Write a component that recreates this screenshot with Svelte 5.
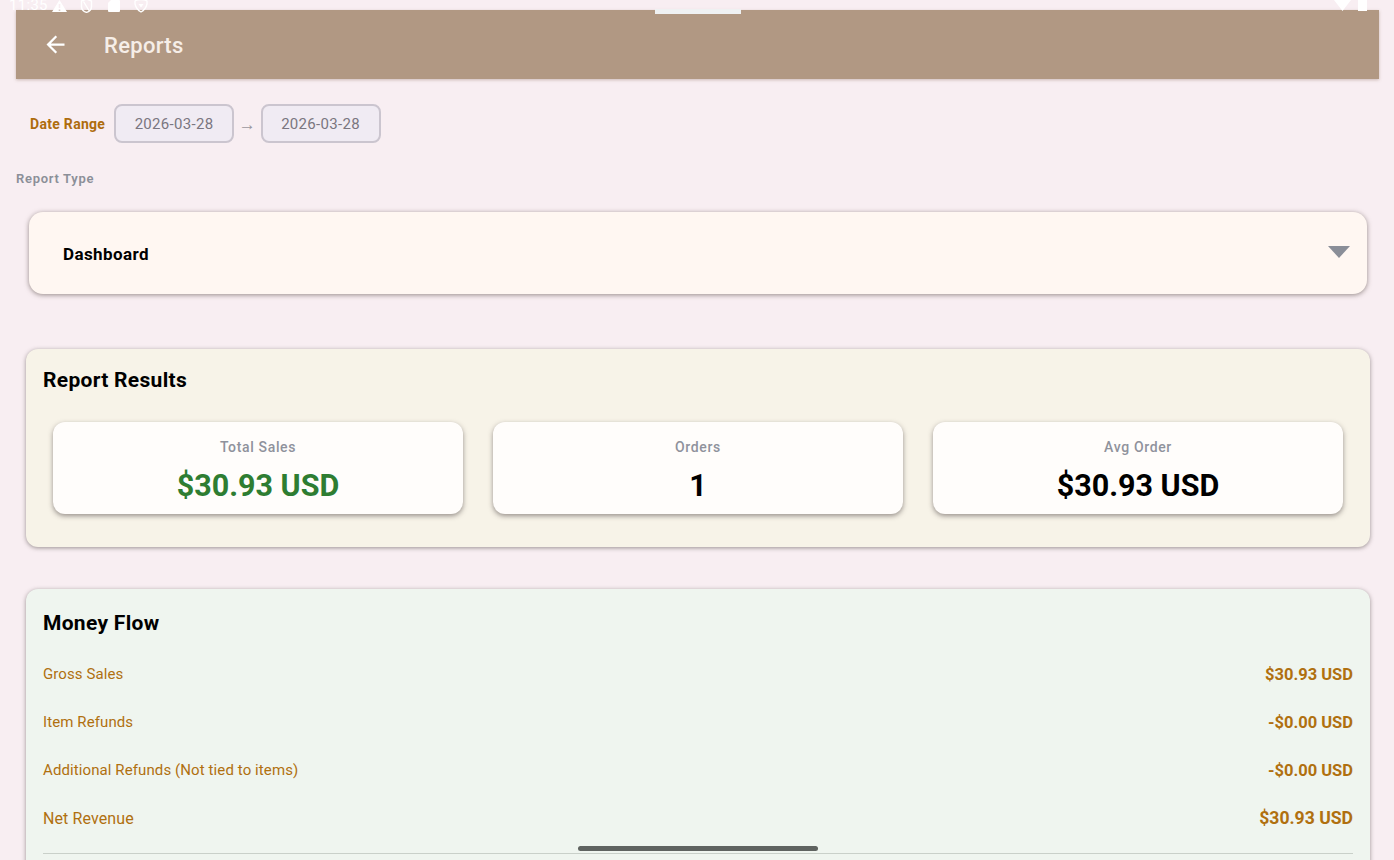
<script>
  const stats = [
    { label: 'Total Sales', value: '$30.93 USD', green: true },
    { label: 'Orders', value: '1' },
    { label: 'Avg Order', value: '$30.93 USD' }
  ];

  const flow = [
    { label: 'Gross Sales', value: '$30.93 USD' },
    { label: 'Item Refunds', value: '-$0.00 USD' },
    { label: 'Additional Refunds (Not tied to items)', value: '-$0.00 USD' },
    { label: 'Net Revenue', value: '$30.93 USD', big: true }
  ];
</script>

<div class="screen">
  <!-- system bars drawn over the app -->
  <div class="status-left">
    <span class="clock">11:35</span>
    <svg class="si warn" width="15" height="12" viewBox="0 0 15 12"><path d="M7.5 0 L15 12 H0 Z M6.7 4 V8 H8.3 V4 Z M6.7 9 V10.6 H8.3 V9 Z" fill="#fff" fill-rule="evenodd" /></svg>
    <svg class="si shield" width="13" height="13" viewBox="0 0 13 13"><path d="M1.5 1 L6.5 -1 L11.5 1 V6.5 C11.5 9.5 9.5 11.5 6.5 12.4 C3.5 11.5 1.5 9.5 1.5 6.5 Z M3.5 1.5 L9 10.5" fill="none" stroke="#fff" stroke-width="1.4" /></svg>
    <svg class="si sd" width="12" height="12" viewBox="0 0 12 12"><path d="M3 0 H11 Q12 0 12 1 V11 Q12 12 11 12 H1 Q0 12 0 11 V3 Z" fill="#fff" /></svg>
    <svg class="si vpn" width="14" height="13" viewBox="0 0 14 13"><path d="M1 1 C4 -1 10 -1 13 1 L13 4 C12 8 10 10.5 7 12 C4 10.5 2 8 1 4 Z" fill="none" stroke="#fff" stroke-width="1.3" /><path d="M4.5 4 H9.5 L7 7.5 Z" fill="#fff" /></svg>
  </div>
  <div class="notch"></div>
  <div class="status-right">
    <svg width="17" height="11" viewBox="0 0 17 11"><path d="M0 0 H17 L8.5 11 Z" fill="#fff" /></svg>
    <span class="battery"></span>
  </div>

  <header class="appbar">
    <svg class="back" width="27" height="27" viewBox="0 0 24 24"><path d="M20 11H7.83l5.59-5.59L12 4l-8 8 8 8 1.41-1.41L7.83 13H20v-2z" fill="#fff" /></svg>
    <h1>Reports</h1>
  </header>

  <div class="date-row">
    <span class="date-label">Date Range</span>
    <div class="date-box">2026-03-28</div>
    <span class="arrow">→</span>
    <div class="date-box">2026-03-28</div>
  </div>

  <div class="type-label">Report Type</div>

  <div class="select">
    <span class="select-text">Dashboard</span>
    <span class="caret"></span>
  </div>

  <section class="card results">
    <h2>Report Results</h2>
    <div class="stats">
      {#each stats as s}
        <div class="stat">
          <div class="stat-label">{s.label}</div>
          <div class="stat-value" class:green={s.green}>{s.value}</div>
        </div>
      {/each}
    </div>
  </section>

  <section class="card money">
    <h2>Money Flow</h2>
    {#each flow as row}
      <div class="flow-row" class:big={row.big}>
        <span>{row.label}</span>
        <span class="flow-value">{row.value}</span>
      </div>
    {/each}
    <div class="divider"></div>
  </section>

  <div class="home-bar"></div>
</div>

<style>
  :global(body) {
    margin: 0;
    background: #f8eef2;
  }

  .screen {
    position: relative;
    width: 1394px;
    height: 860px;
    overflow: hidden;
    background: #f8eef2;
    font-family: Roboto, "Liberation Sans", sans-serif;
    padding-top: 10px;
    box-sizing: border-box;
  }

  .status-left {
    position: absolute;
    left: 0;
    top: 0;
    width: 160px;
    height: 13px;
    z-index: 3;
  }

  .clock {
    position: absolute;
    left: 9px;
    top: 0;
    color: #fff;
    font-size: 15px;
    line-height: 11px;
    letter-spacing: 0.3px;
  }

  .si {
    position: absolute;
    top: 0;
  }

  .warn {
    left: 52px;
  }

  .shield {
    left: 80px;
  }

  .sd {
    left: 108px;
  }

  .vpn {
    left: 134px;
  }

  .notch {
    position: absolute;
    left: 655px;
    top: 9px;
    width: 86px;
    height: 5px;
    background: #eff1f2;
    z-index: 3;
  }

  .status-right {
    position: absolute;
    left: 1334px;
    top: 0;
    display: flex;
    gap: 7px;
    z-index: 3;
  }

  .battery {
    width: 9px;
    height: 11px;
    background: #fff;
  }

  .appbar {
    display: flex;
    align-items: center;
    height: 69px;
    margin: 0 15px 0 16px;
    background: #b19883;
    box-shadow: 0 1px 3px rgba(120, 90, 70, 0.35);
  }

  .back {
    margin-left: 26px;
  }

  .appbar h1 {
    margin: 1px 0 0 35px;
    font-size: 22px;
    font-weight: 500;
    letter-spacing: 0.3px;
    color: #f6eee8;
  }

  .date-row {
    display: flex;
    align-items: center;
    margin: 25px 0 0 30px;
  }

  .date-label {
    width: 84px;
    font-size: 14px;
    font-weight: 700;
    letter-spacing: 0.3px;
    white-space: nowrap;
    color: #ae6c0d;
  }

  .date-box {
    width: 120px;
    height: 39px;
    box-sizing: border-box;
    line-height: 36px;
    text-align: center;
    background: #f0ebf3;
    border: 2px solid #cbc5cf;
    border-radius: 8px;
    font-size: 15px;
    letter-spacing: 0.3px;
    color: #7a7680;
  }

  .arrow {
    width: 26.5px;
    text-align: center;
    color: #9b979d;
    font-size: 17px;
    line-height: 20px;
    padding-top: 1px;
  }

  .type-label {
    margin: 27px 0 0 16px;
    font-size: 13px;
    font-weight: 600;
    letter-spacing: 0.7px;
    color: #8b8f98;
    line-height: 18px;
  }

  .select {
    display: flex;
    align-items: center;
    justify-content: space-between;
    height: 82px;
    margin: 24px 27px 0 29px;
    padding: 0 17px 0 34px;
    background: #fff7f2;
    border-radius: 14px;
    box-shadow: 0 1px 5px rgba(70, 55, 50, 0.55);
    font-size: 17px;
    font-weight: 700;
    letter-spacing: 0.4px;
    color: #000;
  }

  .select-text {
    padding-top: 1px;
  }

  .caret {
    width: 0;
    height: 0;
    border-left: 11px solid transparent;
    border-right: 11px solid transparent;
    border-top: 12px solid #8a8e98;
    filter: blur(0.5px);
    margin-bottom: 2px;
  }

  .card {
    margin: 0 24px 0 26px;
    border-radius: 12px;
    padding: 0 17px;
    box-shadow: 0 1px 4px rgba(60, 50, 50, 0.5);
  }

  .card h2 {
    margin: 0;
    font-size: 21px;
    font-weight: 700;
    letter-spacing: 0.3px;
    color: #000;
    line-height: 26px;
  }

  .results {
    margin-top: 55px;
    height: 198px;
    background: #f7f3e8;
    padding-top: 18px;
    box-sizing: border-box;
  }

  .stats {
    display: grid;
    grid-template-columns: repeat(3, 1fr);
    gap: 30px;
    margin: 29px 10px 0;
  }

  .stat {
    height: 92px;
    background: #fffdfb;
    border-radius: 12px;
    box-shadow: 0 2px 5px rgba(60, 50, 50, 0.5);
    text-align: center;
  }

  .stat-label {
    padding-top: 16px;
    font-size: 14px;
    font-weight: 500;
    letter-spacing: 0.65px;
    line-height: 18px;
    color: #8f929c;
  }

  .stat-value {
    margin-top: 11px;
    font-size: 30.5px;
    font-weight: 700;
    line-height: 38px;
    color: #000;
  }

  .stat-value.green {
    color: #2e7d32;
  }

  .money {
    margin-top: 42px;
    height: 320px;
    background: #eff5ef;
    padding-top: 21px;
  }

  .money h2 {
    margin-bottom: 14px;
  }

  .flow-row {
    display: flex;
    justify-content: space-between;
    align-items: center;
    height: 48px;
    font-size: 15px;
    letter-spacing: 0.1px;
    color: #b0700f;
  }

  .flow-row.big {
    font-size: 16px;
    letter-spacing: 0.1px;
  }

  .flow-value {
    font-size: 16.5px;
    font-weight: 700;
    letter-spacing: 0;
  }

  .flow-row.big .flow-value {
    font-size: 17.6px;
  }

  .divider {
    height: 1px;
    margin-top: 11px;
    background: #c9d0c9;
  }

  .home-bar {
    position: absolute;
    left: 578px;
    top: 846px;
    width: 240px;
    height: 5px;
    border-radius: 3px;
    background: #5f6360;
    z-index: 3;
  }
</style>
